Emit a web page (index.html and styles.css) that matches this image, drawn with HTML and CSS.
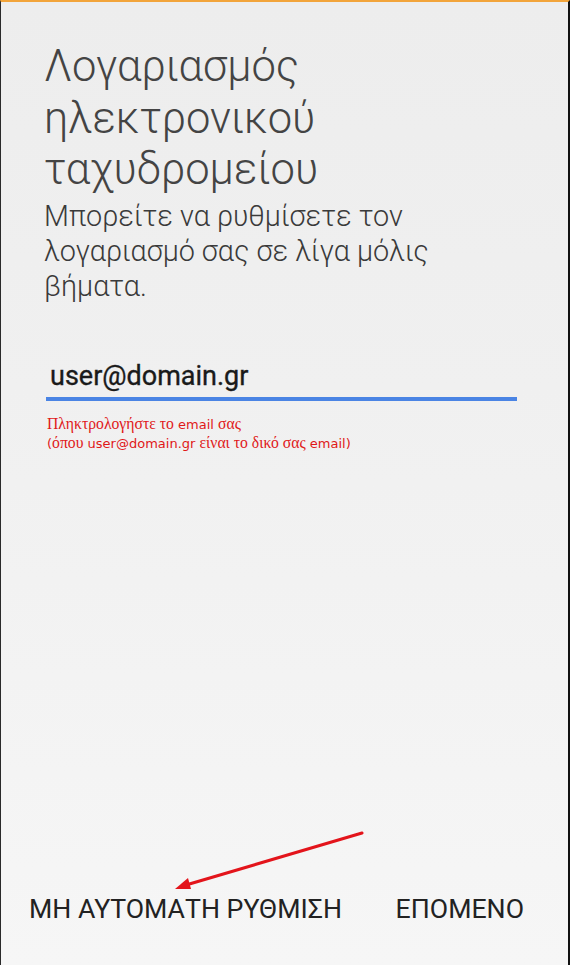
FILE: index.html
```html
<!DOCTYPE html>
<html lang="el">
<head>
<meta charset="utf-8">
<link rel="stylesheet" href="styles.css">
</head>
<body>
<div class="screen">
  <div class="content">
    <h1 class="title">Λογαριασμός<br>ηλεκτρονικού<br>ταχυδρομείου</h1>
    <p class="subtitle">Μπορείτε να ρυθμίσετε τον<br>λογαριασμό σας σε λίγα μόλις<br>βήματα.</p>
    <div class="field">
      <div class="field-value">user@domain.gr</div>
      <div class="field-line"></div>
    </div>
    <p class="hint"><span class="gr">Πληκτρολογήστε το</span> email <span class="gr">σας</span><br>(<span class="gr">όπου</span> user@domain.gr <span class="gr">είναι το δικό σας</span> email)</p>
  </div>
  <div class="actions">
    <span class="btn btn-manual">ΜΗ ΑΥΤΟΜΑΤΗ ΡΥΘΜΙΣΗ</span>
    <span class="btn btn-next">ΕΠΟΜΕΝΟ</span>
  </div>
  <svg class="arrow" width="570" height="965" viewBox="0 0 570 965">
    <line x1="362" y1="833" x2="186" y2="885" stroke="#e3141b" stroke-width="3" stroke-linecap="round"/>
    <polygon points="175,889 188,878 191,889" fill="#e3141b"/>
  </svg>
</div>
</body>
</html>
```

FILE: styles.css
```css
html, body {
  margin: 0;
  padding: 0;
}
body {
  width: 570px;
  height: 965px;
  overflow: hidden;
  font-family: Roboto, "Noto Sans", sans-serif;
}
.screen {
  position: relative;
  box-sizing: border-box;
  width: 570px;
  height: 965px;
  border-top: 2px solid #f2a43a;
  border-left: 1px solid #2a2a2a;
  border-right: 2px solid #111;
  background: linear-gradient(#ededed, #f0f0f0 40%, #f6f6f6);
  display: flex;
  flex-direction: column;
}
.content {
  flex: 1;
  padding: 39px 20px 0 43px;
}
.title {
  margin: 0;
  font-weight: 300;
  font-size: 43.5px;
  line-height: 51.5px;
  color: #444;
}
.subtitle {
  margin: 3px 0 0;
  font-weight: 300;
  font-size: 28.8px;
  line-height: 35px;
  color: #3a3a3a;
}
.field {
  margin: 57px 31px 0 2px;
}
.field-value {
  padding-left: 4px;
  font-weight: 400;
  font-size: 27px;
  line-height: 30px;
  color: #1a1a1a;
  -webkit-text-stroke: 0.35px #1a1a1a;
}
.field-line {
  margin-top: 6px;
  height: 4px;
  background: #4a84e4;
}
.hint {
  margin: 14px 0 0 3px;
  font-family: "DejaVu Sans", Verdana, sans-serif;
  font-size: 13px;
  line-height: 18px;
  color: #e01818;
}
.hint .gr {
  font-family: "Liberation Serif", serif;
  font-size: 15.7px;
}
.actions {
  display: flex;
  justify-content: space-between;
  align-items: baseline;
  padding: 0 44px 41px 28px;
}
.btn {
  font-size: 26.7px;
  line-height: 30px;
  color: #222;
}
.arrow {
  position: absolute;
  left: -1px;
  top: -2px;
  pointer-events: none;
}
```
